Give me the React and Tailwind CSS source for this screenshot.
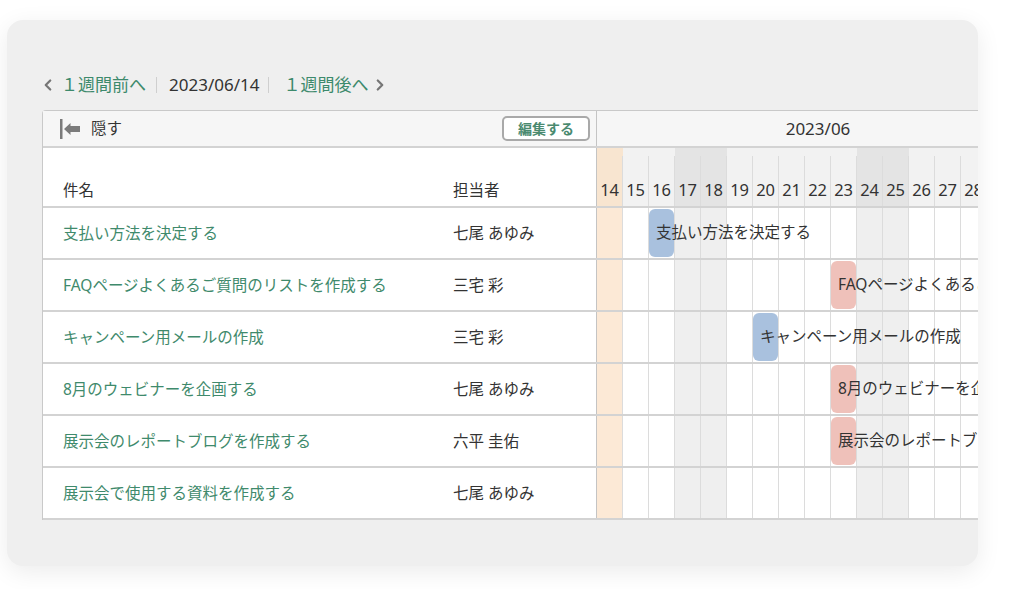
import { ChevronLeft, ChevronRight } from "lucide-react";

// only the days that show inside the card (the rest of June is cut off)
const days = [14, 15, 16, 17, 18, 19, 20, 21, 22, 23, 24, 25, 26, 27, 28];
const weekends = [17, 18, 24, 25];
const today = 14;

const tasks = [
  { name: "支払い方法を決定する", person: "七尾 あゆみ", start: 16, color: "bg-[#a9c1de]" },
  { name: "FAQページよくあるご質問のリストを作成する", person: "三宅 彩", start: 23, color: "bg-[#efc1ba]" },
  { name: "キャンペーン用メールの作成", person: "三宅 彩", start: 20, color: "bg-[#a9c1de]" },
  { name: "8月のウェビナーを企画する", person: "七尾 あゆみ", start: 23, color: "bg-[#efc1ba]" },
  { name: "展示会のレポートブログを作成する", person: "六平 圭佑", start: 23, color: "bg-[#efc1ba]" },
  { name: "展示会で使用する資料を作成する", person: "七尾 あゆみ", start: null, color: "" },
];

function dayBodyBg(d) {
  if (d === today) return "bg-[#fce9d6]";
  if (weekends.includes(d)) return "bg-[#efefef]";
  return "bg-white";
}

function dayHeadBg(d) {
  if (d === today) return "bg-[#f8e5d0]";
  if (weekends.includes(d)) return "bg-[#e4e4e4]";
  return "bg-[#f2f2f2]";
}

function HideIcon() {
  return (
    <svg width="22" height="22" viewBox="0 0 22 22" fill="none">
      <rect x="1" y="1" width="2.5" height="20" fill="#7b7b7b" />
      <polygon points="5,11 11.5,5 11.5,8 21,8 21,14 11.5,14 11.5,17" fill="#7b7b7b" />
    </svg>
  );
}

export default function App() {
  return (
    <div
      className="w-[1015px] h-[589px] bg-white pt-[20px] pl-[7px] overflow-hidden"
      style={{ fontFamily: '"Noto Sans", "Noto Sans CJK JP", sans-serif' }}
    >
      <div className="w-[971px] h-[546px] rounded-[16px] bg-[#efefef] shadow-[0_6px_24px_rgba(0,0,0,0.08)] overflow-hidden pt-[55px] pl-[35px]">
        {/* ================= NAV ================= */}
        <div className="flex items-center h-[20px] text-[17px]">
          <ChevronLeft size={18} strokeWidth={3} className="text-[#777] -ml-[3px]" />
          <span className="ml-[4px] text-[#3d8a6c]">１週間前へ</span>
          <span className="ml-[10px] w-px h-[16px] bg-[#cfcfcf]" />
          <span className="ml-[12px] text-[#333]">2023/06/14</span>
          <span className="ml-[9px] w-px h-[16px] bg-[#cfcfcf]" />
          <span className="ml-[14px] text-[#3d8a6c]">１週間後へ</span>
          <ChevronRight size={18} strokeWidth={3} className="text-[#777] ml-[3px]" />
        </div>

        {/* ================= TABLE ================= */}
        <div className="mt-[15px] w-max border-l border-t border-[#c9c9c9] rounded-tl-[4px] bg-white text-[15.5px] text-[#333]">
          {/* top header */}
          <div className="flex h-[37px] border-b-2 border-[#d3d3d3]">
            <div className="w-[554px] border-r border-[#c4c4c4] bg-[#f6f6f6] flex items-center justify-between pl-[16px] pr-[6px]">
              <div className="flex items-center gap-[10px]">
                <HideIcon />
                <span>隠す</span>
              </div>
              <button className="w-[88px] h-[25px] rounded-[5px] border-2 border-[#a9a9a9] bg-white text-[14px] font-bold text-[#4a8a6f] leading-none">
                編集する
              </button>
            </div>
            <div className="w-[442px] bg-[#f6f6f6] flex items-center justify-center text-[17px]">
              2023/06
            </div>
          </div>

          {/* column header */}
          <div className="flex h-[60px] border-b-2 border-[#d3d3d3]">
            <div className="w-[554px] border-r border-[#c4c4c4] flex items-end pb-[4px] pl-[20px]">
              <span className="w-[390px]">件名</span>
              <span>担当者</span>
            </div>
            {days.map((d) => (
              <div key={d} className={`w-[26px] flex flex-col ${dayHeadBg(d)}`}>
                <div className="h-[8px]" />
                <div className="flex-1 border-r border-[#dcdcdc] flex items-end justify-center pb-[3px] text-[16.5px] tracking-[-0.2px]">
                  {d}
                </div>
              </div>
            ))}
          </div>

          {/* rows */}
          {tasks.map((t, i) => (
            <div key={i} className="flex h-[52px] border-b-2 border-[#d3d3d3]">
              <div className="w-[554px] border-r border-[#c4c4c4] flex items-center pl-[20px] pt-[2px]">
                <span className="w-[390px] text-[#3f8a6c]">{t.name}</span>
                <span>{t.person}</span>
              </div>
              <div className="relative flex">
                {days.map((d) => (
                  <div key={d} className={`w-[26px] border-r border-[#dcdcdc] ${dayBodyBg(d)}`} />
                ))}
                {t.start && (
                  <div
                    className="absolute top-[1px] bottom-[1px] flex items-center"
                    style={{ left: (t.start - 14) * 26 }}
                  >
                    <div className={`absolute left-0 top-0 bottom-0 w-[25px] rounded-[6px] ${t.color}`} />
                    <span className="relative pl-[7px] whitespace-nowrap">{t.name}</span>
                  </div>
                )}
              </div>
            </div>
          ))}
        </div>
      </div>
    </div>
  );
}
